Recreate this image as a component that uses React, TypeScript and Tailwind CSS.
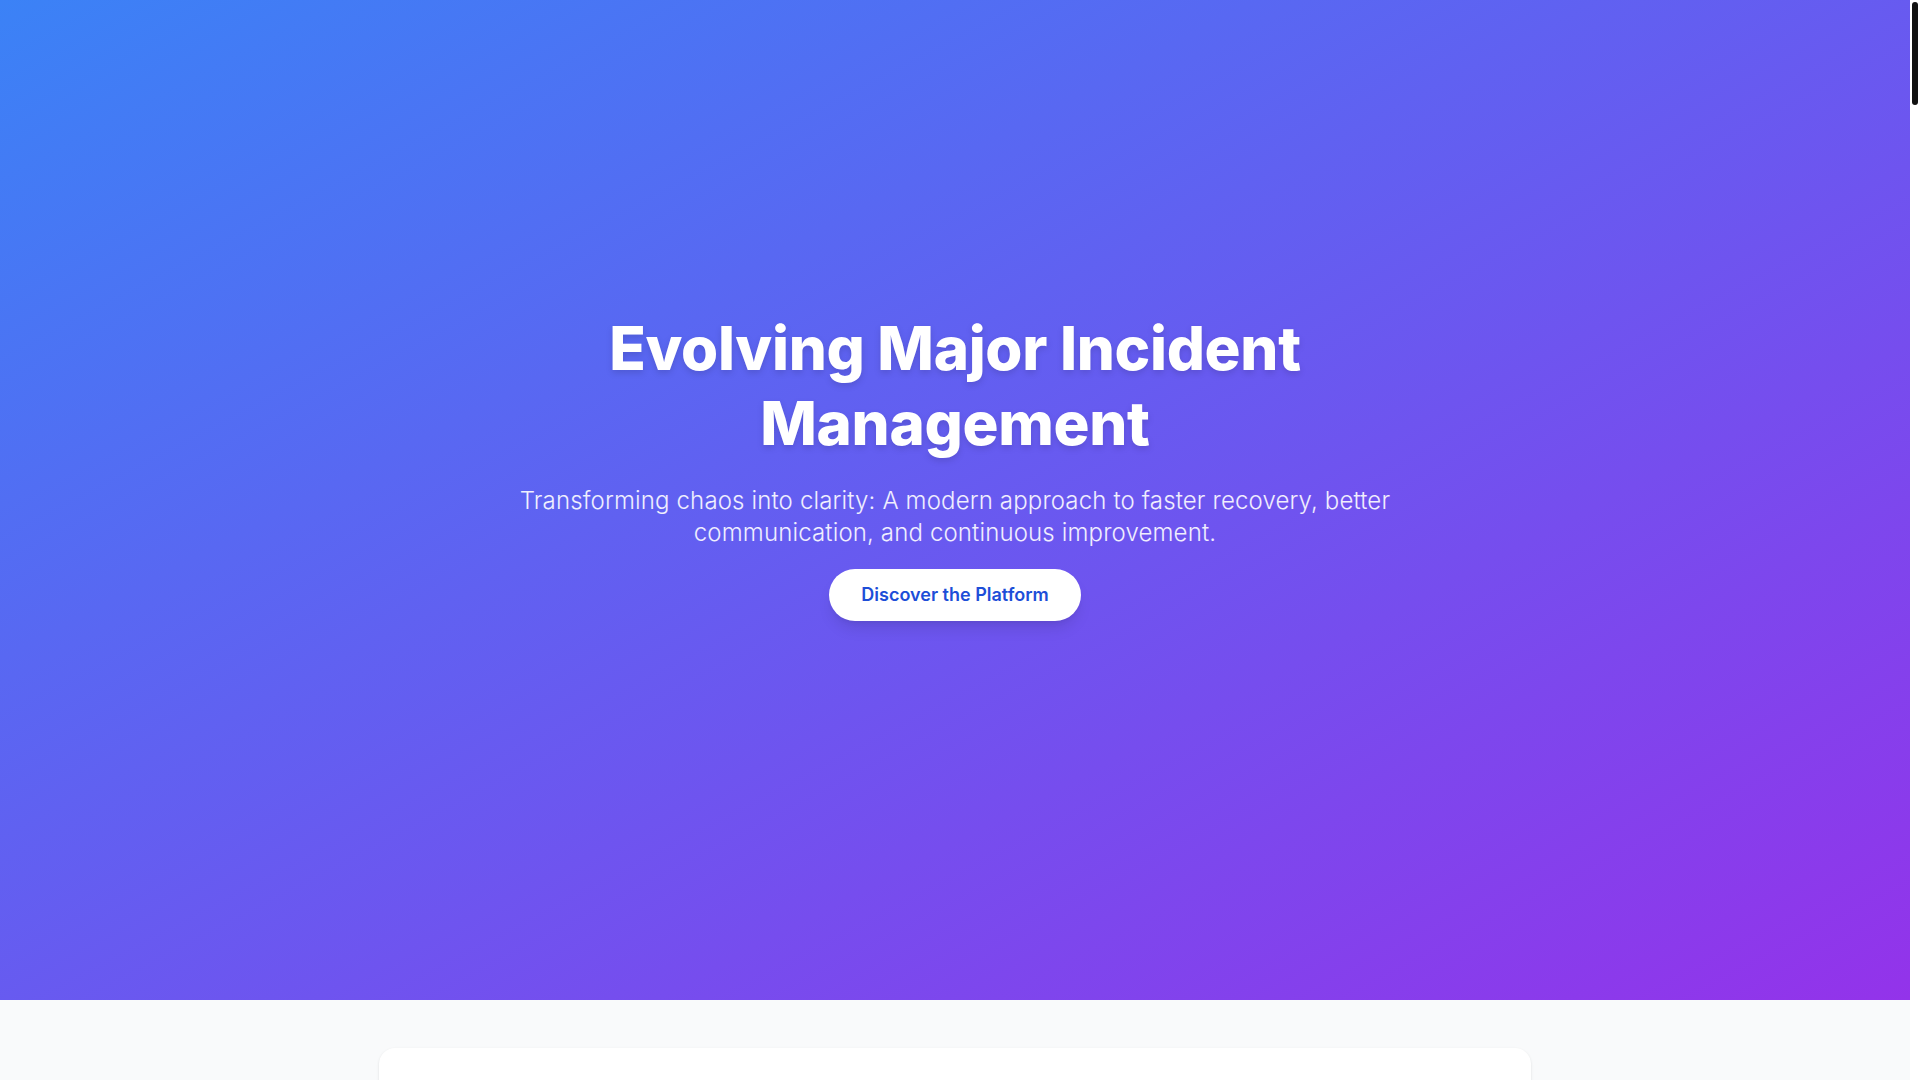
const sections = [
  "The Challenge",
  "A New Operating Model",
  "Roles and Responsibilities",
  "Communication Framework",
  "Tooling and Automation",
  "Post-Incident Review",
  "Measuring Success",
];

function ScrollTrack() {
  return (
    <div className="fixed top-0 right-0 h-screen w-[10px] bg-white">
      <div className="mt-[2px] ml-[2px] w-[6px] h-[103px] rounded-full bg-[#111]" />
    </div>
  );
}

export default function App() {
  return (
    <div className="min-h-screen bg-white font-['Inter',sans-serif] text-gray-800">
      <div className="mr-[10px] bg-[#f9fafb]">
        <section className="h-[1000px] bg-[linear-gradient(to_bottom_right,#3b82f6,#9333ea)] flex items-center justify-center px-6 pb-[68px]">
          <div className="flex flex-col items-center text-center max-w-4xl">
            <h1 className="text-6xl leading-tight font-extrabold tracking-[-0.005em] text-white mb-6 drop-shadow-md">
              Evolving Major Incident
              <br />
              Management
            </h1>
            <p className="text-2xl font-light tracking-[0.006em] text-white/90 mb-5">
              Transforming chaos into clarity: A modern approach to faster recovery, better communication, and
              continuous improvement.
            </p>
            <a
              href="#platform"
              className="bg-white text-[#1d4ed8] text-lg font-semibold px-8 py-3 rounded-full shadow-lg"
            >
              Discover the Platform
            </a>
          </div>
        </section>

        <main id="platform" className="px-6 py-12 flex flex-col gap-12">
          {sections.map((title) => (
            <div key={title} className="max-w-6xl w-full mx-auto bg-white rounded-2xl shadow-sm p-12 min-h-[1380px]">
              <h2 className="text-3xl font-bold text-gray-900 mb-4">{title}</h2>
              <p className="text-lg text-gray-600 leading-relaxed">
                Major incidents demand fast coordination across teams, clear communication with stakeholders, and a
                reliable record of what happened and why.
              </p>
            </div>
          ))}
        </main>
      </div>
      <ScrollTrack />
    </div>
  );
}
